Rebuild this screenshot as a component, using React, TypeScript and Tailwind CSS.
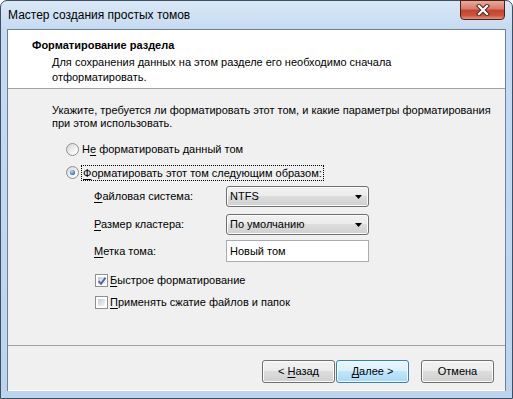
import type { ReactNode } from 'react'

const ui = "font-['Liberation_Sans',Arial,sans-serif]"

function Radio({ checked }: { checked?: boolean }) {
  return (
    <div className="w-[13px] h-[13px] rounded-full border border-[#8f8f8f] bg-[linear-gradient(135deg,#d4d4d4,#f7f7f7_70%,#ffffff)] flex items-center justify-center shrink-0">
      {checked && (
        <div className="w-[5px] h-[5px] rounded-full bg-[radial-gradient(circle_at_40%_35%,#b9e2fb,#2a6db3_70%,#16508f)]" />
      )}
    </div>
  )
}

function Checkbox({ checked }: { checked?: boolean }) {
  return (
    <div className="w-[13px] h-[13px] border border-[#8e8f8f] bg-white p-[2px] shrink-0 relative">
      <div className="w-full h-full bg-[linear-gradient(135deg,#c8ccd2,#f4f5f6)]" />
      {checked && (
        <svg className="absolute left-[1px] top-[1px]" width="10" height="10" viewBox="0 0 10 10">
          <path d="M1.5 5.2 L4 7.8 L8.6 1.6" fill="none" stroke="#4a63a6" strokeWidth="1.8" />
        </svg>
      )}
    </div>
  )
}

function Combo({ value }: { value: string }) {
  return (
    <div className="w-[143px] h-[21px] rounded-[3px] border border-[#707070] bg-[linear-gradient(#f2f2f2,#ebebeb_50%,#dddddd_50%,#cfcfcf)] shadow-[inset_0_0_0_1px_#fbfbfb] flex items-center justify-between pl-[3px] pr-[6px]">
      <span>{value}</span>
      <svg width="7" height="4" viewBox="0 0 7 4">
        <path d="M0 0 H7 L3.5 4 Z" fill="#000" />
      </svg>
    </div>
  )
}

function Btn({ children, primary }: { children: ReactNode; primary?: boolean }) {
  return (
    <div
      className={
        primary
          ? 'w-[73px] h-[23px] rounded-[3px] border border-[#3c7fb1] bg-[linear-gradient(#eaf6fd,#d9f0fc_50%,#bee6fd_50%,#a7d9f5)] shadow-[inset_0_0_0_1px_#f4fbfe] flex items-center justify-center'
          : 'w-[73px] h-[23px] rounded-[3px] border border-[#707070] bg-[linear-gradient(#f2f2f2,#ebebeb_50%,#dddddd_50%,#cfcfcf)] shadow-[inset_0_0_0_1px_#fbfbfb] flex items-center justify-center'
      }
    >
      <span className="whitespace-pre">{children}</span>
    </div>
  )
}

export default function App() {
  return (
    <div className={`w-[513px] h-[399px] ${ui} text-[11px] text-black leading-[13px]`}>
      <div className="w-full h-full rounded-t-[7px] border border-[#3e4f63] bg-[linear-gradient(#dae8f6,#c6dbf1_28px,#bcd4ed)] relative flex flex-col">
        {/* title bar */}
        <div className="h-[28px] flex items-center pl-[7px] text-[12px] text-black">Мастер создания простых томов</div>
        <div className="absolute top-[-1px] right-[7px] w-[45px] h-[20px] rounded-b-[4px] border border-[#4c201a] bg-[linear-gradient(#eaaa9a,#d9786a_45%,#c4432e_50%,#cc5438_80%,#e2977a)] flex items-center justify-center">
          <svg width="14" height="12" viewBox="0 0 14 12">
            <path d="M3 2 L11 10 M11 2 L3 10" stroke="#4a2a26" strokeWidth="4.2" strokeLinecap="square" />
            <path d="M3 2 L11 10 M11 2 L3 10" stroke="#ffffff" strokeWidth="2.2" strokeLinecap="square" />
          </svg>
        </div>

        {/* client */}
        <div className="ml-[6px] w-[499px] h-[362px] border border-[#6d8099] bg-[#f0f0f0] flex flex-col">
          <div className="h-[59px] bg-white border-b border-[#a0a0a0] pt-[9px]">
            <div className="pl-[24px] font-bold">Форматирование раздела</div>
            <div className="pl-[44px] mt-[3px] leading-[15px]">
              <div>Для сохранения данных на этом разделе его необходимо сначала</div>
              <div>отформатировать.</div>
            </div>
          </div>

          <div className="pl-[44px] pt-[15px] flex flex-col">
            <div>Укажите, требуется ли форматировать этот том, и какие параметры форматирования</div>
            <div>при этом использовать.</div>

            <div className="flex items-center gap-[3px] ml-[14px] mt-[11px] h-[17px]">
              <Radio />
              <span>
                Н<u className="underline-offset-2">е</u> форматировать данный том
              </span>
            </div>
            <div className="flex items-center gap-[2px] ml-[14px] mt-[6px] h-[17px]">
              <Radio checked />
              <span className="border border-dotted border-black px-[1px] leading-[14px]">
                <u className="underline-offset-2">Ф</u>орматировать этот том следующим образом:
              </span>
            </div>

            <div className="ml-[42px] mt-[5px] flex flex-col gap-[7px]">
              <div className="flex items-center">
                <span className="w-[132px]">
                  <u className="underline-offset-2">Ф</u>айловая система:
                </span>
                <Combo value="NTFS" />
              </div>
              <div className="flex items-center">
                <span className="w-[132px]">
                  <u className="underline-offset-2">Р</u>азмер кластера:
                </span>
                <Combo value="По умолчанию" />
              </div>
              <div className="flex items-center -mt-[2px]">
                <span className="w-[132px]">
                  <u className="underline-offset-2">М</u>етка тома:
                </span>
                <div className="w-[143px] h-[22px] border border-[#abadb3] border-t-[#a6abb4] bg-white flex items-center pl-[3px]">
                  Новый том
                </div>
              </div>
            </div>

            <div className="ml-[43px] mt-[12px] flex flex-col gap-[9px]">
              <div className="flex items-center gap-[2px] h-[13px]">
                <Checkbox checked />
                <span>
                  <u className="underline-offset-2">Б</u>ыстрое форматирование
                </span>
              </div>
              <div className="flex items-center gap-[2px] h-[13px]">
                <Checkbox />
                <span>
                  <u className="underline-offset-2">П</u>рименять сжатие файлов и папок
                </span>
              </div>
            </div>
          </div>

          <div className="flex-1" />
          <div className="border-t border-[#a0a0a0] shadow-[0_1px_0_#ffffff] h-[45px] flex items-start pt-[14px] justify-end pr-[11px] gap-[12px]">
            <div className="flex gap-[1px]">
              <Btn>
                {'< '}
                <u className="underline-offset-2">Н</u>азад
              </Btn>
              <Btn primary>
                <u className="underline-offset-2">Д</u>
                {'алее >'}
              </Btn>
            </div>
            <Btn>Отмена</Btn>
          </div>
        </div>
      </div>
    </div>
  )
}
